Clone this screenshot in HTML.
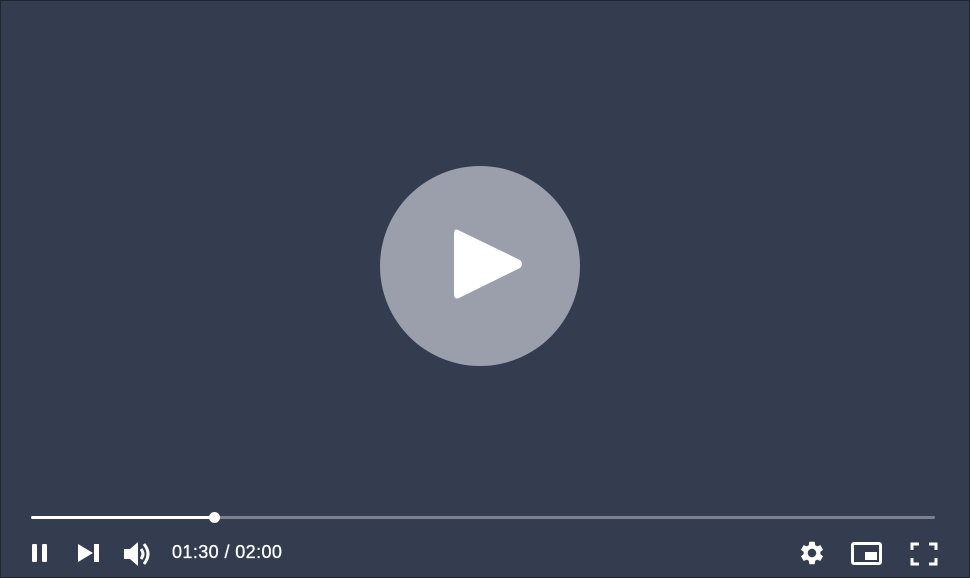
<!DOCTYPE html>
<html><head><style>
html,body{margin:0;padding:0;}
body{width:970px;height:578px;background:#333d4f;position:relative;overflow:hidden;font-family:"Liberation Sans",sans-serif;}
.frame{position:absolute;left:0;top:0;width:968px;height:576px;border:1px solid #1f2633;}
.circle{position:absolute;left:380px;top:166px;width:200px;height:200px;border-radius:50%;background:#9a9fab;}
.track{position:absolute;left:31px;top:516px;width:904px;height:3px;background:#7b828e;border-radius:2px;}
.played{position:absolute;left:31px;top:516px;width:183px;height:3px;background:#fff;border-radius:2px;}
.knob{position:absolute;left:209px;top:512px;width:11px;height:11px;border-radius:50%;background:#fff;}
.time{position:absolute;left:172px;top:542px;color:#fff;font-size:18px;letter-spacing:0.4px;-webkit-text-stroke:0.3px #fff;}
svg{position:absolute;}
</style></head><body>
<div class="frame"></div>
<div class="circle"></div>
<svg style="left:450px;top:224px" width="76" height="80" viewBox="0 0 76 80"><path d="M8 6 Q4 4 4 10 L4 70 Q4 76 9 74 L70 44 Q74 40 70 36 Z" fill="#fff"/></svg>
<div class="track"></div><div class="played"></div><div class="knob"></div>
<svg style="left:30px;top:542px" width="22" height="22"><rect x="2" y="2" width="5" height="18" rx="1" fill="#fff"/><rect x="12" y="2" width="5" height="18" rx="1" fill="#fff"/></svg>
<svg style="left:76px;top:542px" width="26" height="22"><path d="M2 2 L17 11 L2 20Z" fill="#fff"/><rect x="18" y="2" width="5" height="18" fill="#fff"/></svg>
<svg style="left:121px;top:540px" width="32" height="28"><path d="M3 9 H9 L17 2 V26 L9 19 H3Z" fill="#fff"/><path d="M20 9 Q24 14 20 19" stroke="#fff" stroke-width="3" fill="none"/><path d="M23 4 Q31 14 23 24" stroke="#fff" stroke-width="3" fill="none"/></svg>
<div class="time">01:30 / 02:00</div>
<svg style="left:798px;top:539px" width="28" height="28" viewBox="0 0 24 24"><path fill="#fff" d="M19.14 12.940c.04-.3.06-.61.06-.94 0-.32-.02-.64-.07-.94l2.030-1.58a.49.49 0 0 0 .12-.61l-1.920-3.32a.488.488 0 0 0-.59-.22l-2.390.96c-.5-.38-1.030-.7-1.620-.94l-.36-2.540a.484.484 0 0 0-.48-.41h-3.840c-.24 0-.43.17-.47.41l-.36 2.540c-.59.24-1.130.57-1.620.94l-2.390-.96c-.22-.08-.47 0-.59.22L2.74 8.870c-.12.21-.08.47.12.61l2.030 1.580c-.05.3-.09.63-.09.94s.02.64.07.94l-2.030 1.580a.49.49 0 0 0-.12.61l1.920 3.320c.12.22.37.29.59.22l2.390-.96c.5.38 1.030.7 1.620.94l.36 2.540c.05.24.24.41.48.41h3.840c.24 0 .44-.17.47-.41l.36-2.540c.59-.24 1.130-.56 1.620-.94l2.390.96c.22.08.47 0 .59-.22l1.920-3.320c.12-.22.07-.47-.12-.61l-2.010-1.580zM12 15.6c-1.980 0-3.6-1.620-3.6-3.6s1.620-3.6 3.6-3.6 3.6 1.620 3.6 3.6-1.620 3.6-3.6 3.6z"/></svg>
<svg style="left:850px;top:541px" width="34" height="26"><rect x="2.5" y="2.5" width="28" height="20" rx="1.5" stroke="#fff" stroke-width="3" fill="none"/><rect x="15" y="11" width="12" height="8" fill="#fff"/></svg>
<svg style="left:909px;top:540px" width="30" height="28"><path d="M3 10 V4 H10 M20 4 H27 V10 M27 18 V24 H20 M10 24 H3 V18" stroke="#fff" stroke-width="3" fill="none"/></svg>
</body></html>
